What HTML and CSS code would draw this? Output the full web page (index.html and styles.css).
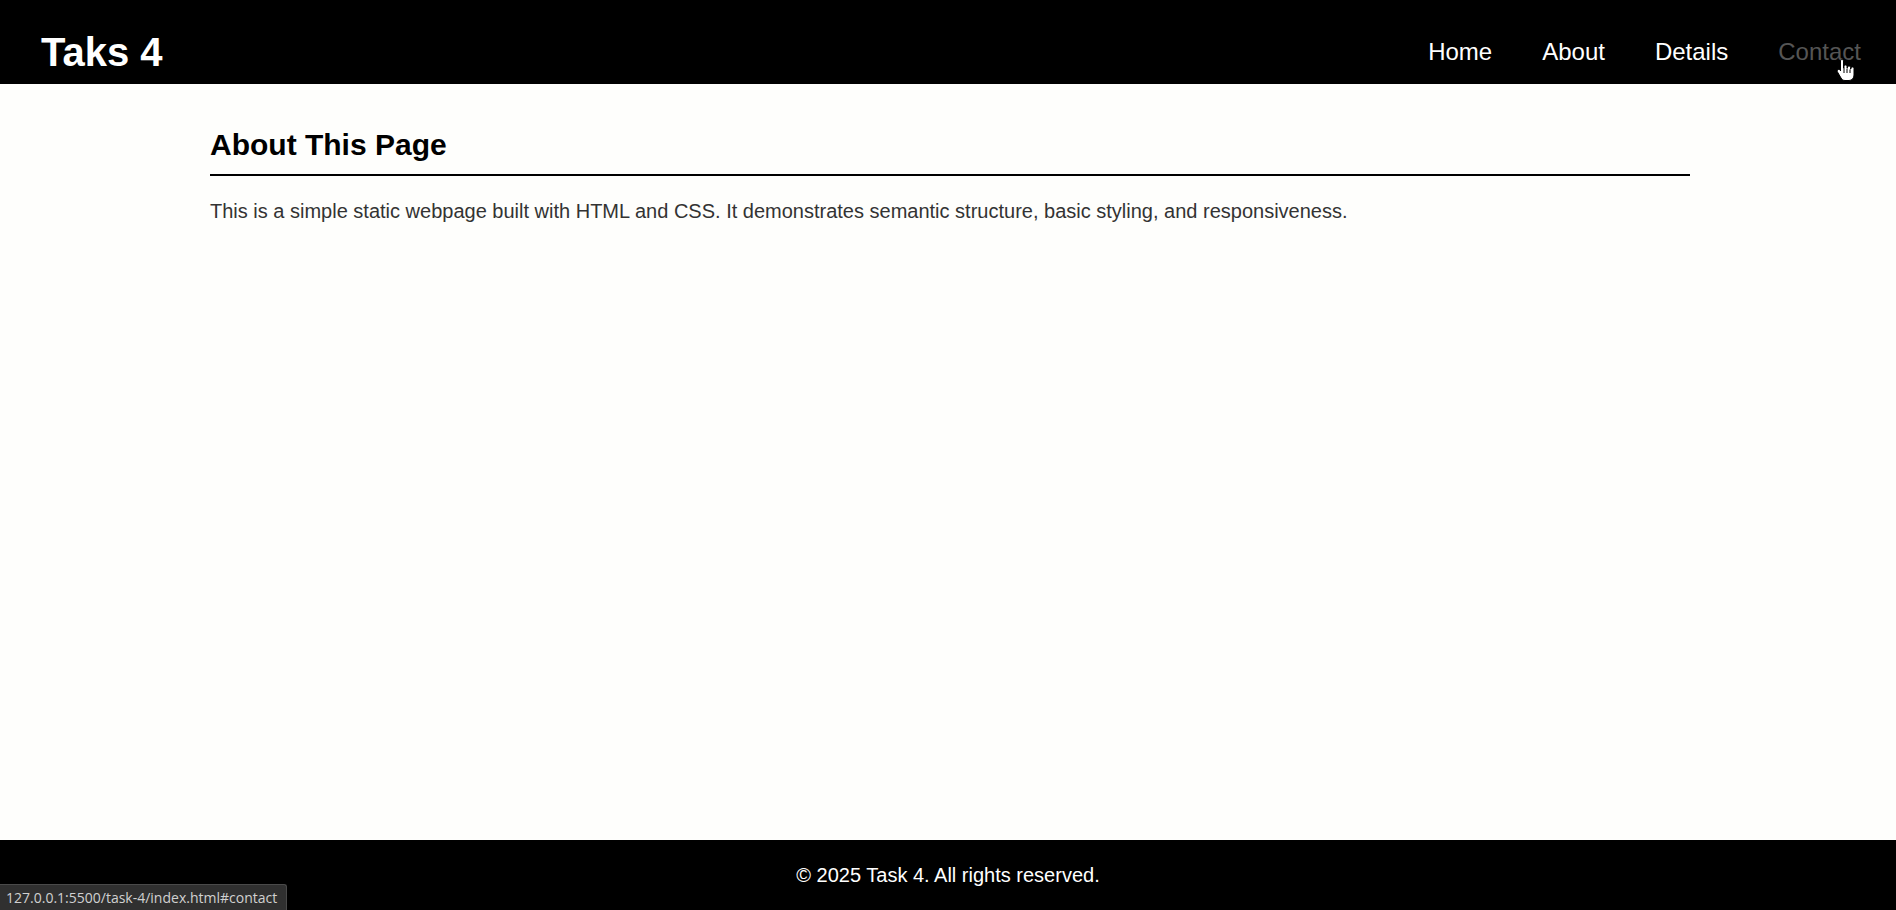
FILE: index.html
```html
<!DOCTYPE html>
<html lang="en">
<head>
<meta charset="utf-8">
<title>Taks 4</title>
<link rel="stylesheet" href="styles.css">
</head>
<body>
<header class="site-header">
  <h1 class="logo">Taks 4</h1>
  <nav class="nav">
    <a href="#home" class="nav-link">Home</a>
    <a href="#about" class="nav-link">About</a>
    <a href="#details" class="nav-link">Details</a>
    <a href="#contact" class="nav-link nav-link-hover">Contact</a>
  </nav>
</header>
<main class="content">
  <section class="section">
    <h2 class="section-title">About This Page</h2>
    <p class="section-text">This is a simple static webpage built with HTML and CSS. It demonstrates semantic structure, basic styling, and responsiveness.</p>
  </section>
</main>
<footer class="site-footer">
  <p class="footer-text">© 2025 Task 4. All rights reserved.</p>
</footer>
<div class="status-bubble">127.0.0.1:5500/task-4/index.html#contact</div>
<svg class="cursor" width="20" height="24" viewBox="0 0 20 24"><path d="M6 1.5c.8 0 1.5.7 1.5 1.5v7h.5V8.5c0-.8.7-1.5 1.5-1.5s1.5.7 1.5 1.5V10h.5V9.5c0-.8.7-1.5 1.5-1.5s1.5.7 1.5 1.5V11h.5v-.5c0-.8.7-1.5 1.5-1.5s1.5.7 1.5 1.5V17c0 3-2 5.5-5 5.5H9c-2 0-3-1-4-2.5L1.5 14c-.5-.8-.3-1.8.5-2.3s1.8-.3 2.3.5L4.5 13V3c0-.8.7-1.5 1.5-1.5z" fill="#fff" stroke="#000" stroke-width="1"/><path d="M8 10v5M11 10.5v4.5M14 11.5v3.5" stroke="#000" stroke-width="1" fill="none"/></svg>
</body>
</html>
```
FILE: styles.css
```css
* { box-sizing: border-box; }
html, body { margin: 0; padding: 0; }
body {
  min-height: 100vh;
  display: flex;
  flex-direction: column;
  background: #fefefc;
  font-family: "Liberation Sans", Arial, sans-serif;
  color: #333;
}
.site-header {
  height: 84px;
  background: #000;
  display: flex;
  justify-content: space-between;
  align-items: center;
  padding: 20px 35px 0 41px;
}
.logo {
  margin: 0;
  font-size: 40px;
  font-weight: bold;
  color: #fff;
}
.nav {
  display: flex;
  gap: 50px;
}
.nav-link {
  font-size: 24px;
  color: #fff;
  text-decoration: none;
}
.nav-link-hover { color: #555; }
.content {
  flex: 1;
  padding: 44px 206px 0 210px;
}
.section-title {
  margin: 0 0 24px;
  padding-bottom: 12px;
  border-bottom: 2px solid #000;
  font-size: 30px;
  font-weight: bold;
  color: #000;
}
.section-text {
  margin: 0;
  font-size: 20px;
  color: #333;
}
.site-footer {
  height: 70px;
  background: #000;
  display: flex;
  align-items: center;
  justify-content: center;
}
.footer-text {
  margin: 0;
  font-size: 20px;
  color: #fff;
}
.status-bubble {
  position: fixed;
  left: 0;
  bottom: 0;
  height: 26px;
  width: 287px;
  padding: 3px 0 0 6px;
  background: #303030;
  border: 1px solid #4a4a4a;
  border-left: none;
  border-bottom: none;
  border-top-right-radius: 3px;
  font-family: "Open Sans", "Noto Sans", sans-serif;
  font-size: 14px;
  color: #d0d0d0;
  white-space: nowrap;
}
.cursor {
  position: absolute;
  left: 1836px;
  top: 58px;
}
```
